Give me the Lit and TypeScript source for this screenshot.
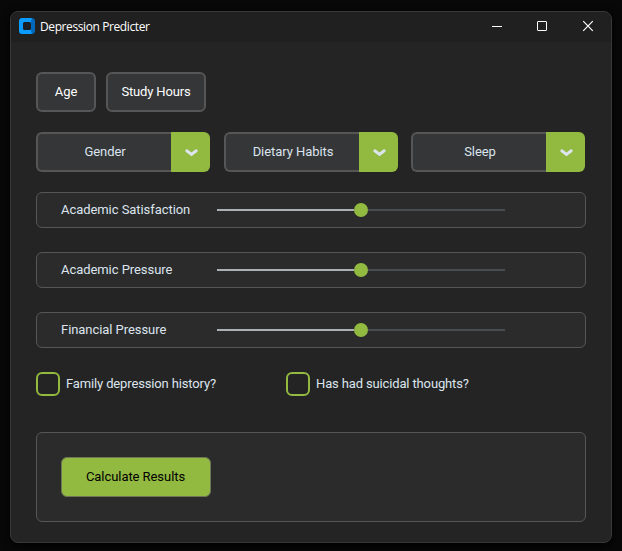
import { LitElement, html, css } from "lit";
import { customElement } from "lit/decorators.js";

@customElement("app-root")
export class AppRoot extends LitElement {
  static styles = css`
    :host {
      display: block;
      box-sizing: border-box;
      width: 622px;
      height: 551px;
      padding: 11px 10px 8px;
      overflow: hidden;
      background: #080808;
      font: 13px/16px Roboto, "Liberation Sans", sans-serif;
      letter-spacing: -0.06px;
      color: #dce4ee;
    }
    * { box-sizing: border-box; }
    .window {
      width: 602px;
      height: 532px;
      border: 1px solid #383838;
      border-radius: 8px;
      background: #242424;
      overflow: hidden;
      box-shadow: 0 2px 8px #000;
    }
    .titlebar {
      display: flex;
      align-items: center;
      height: 30px;
      padding-left: 8px;
      background: #202020;
      color: #fff;
    }
    .logo { display: block; margin: 0 5px 2px 0; }
    .title {
      flex: 1;
      font: 12px/16px "Open Sans", "Noto Sans", sans-serif;
      letter-spacing: -0.4px;
      white-space: nowrap;
    }
    .controls { display: block; flex: none; }
    .body {
      padding: 30px 25px 0;
      display: flex;
      flex-direction: column;
      white-space: nowrap;
    }
    .entries { display: flex; gap: 10px; margin-bottom: 20px; }
    .entry {
      height: 40px;
      border: 2px solid #565656;
      border-radius: 6px;
      background: #343638;
      display: flex;
      align-items: center;
      justify-content: center;
      padding-bottom: 1px;
      color: #fff;
    }
    .age { width: 60px; }
    .hours { width: 100px; letter-spacing: -0.15px; }
    .combos { display: flex; gap: 14px; margin-bottom: 20px; }
    .combo { display: flex; width: 174px; height: 40px; }
    .combo.last { margin-left: -1px; }
    .choice {
      width: 135px;
      border: 2px solid #565656;
      border-right: 0;
      border-radius: 6px 0 0 6px;
      background: #343638;
      display: flex;
      align-items: center;
      justify-content: center;
      padding: 0 0 1px 1px;
    }
    .arrow {
      width: 39px;
      border-radius: 0 6px 6px 0;
      background: #92b940;
      display: flex;
      align-items: center;
      justify-content: center;
      padding: 1px 0 0 2px;
    }
    .panel {
      width: 550px;
      border: 1px solid #565656;
      border-radius: 6px;
      background: #2b2b2b;
    }
    .rating {
      display: flex;
      align-items: center;
      height: 36px;
      padding-left: 24px;
      margin-bottom: 24px;
    }
    .label { width: 156px; padding-bottom: 1px; }
    .slider {
      width: 288px;
      display: flex;
      align-items: center;
    }
    .track { height: 2px; flex: 1; background: #4a4d50; }
    .filled { background: #aab0b5; }
    .knob {
      width: 14px;
      height: 14px;
      border-radius: 50%;
      background: #92b940;
    }
    .checks { display: flex; height: 24px; margin-bottom: 36px; }
    .check {
      display: flex;
      align-items: center;
      gap: 6px;
      width: 250px;
      letter-spacing: -0.14px;
    }
    .box {
      width: 24px;
      height: 24px;
      border: 2px solid #92b940;
      border-radius: 6px;
    }
    .check span { padding-bottom: 1px; }
    .result { height: 90px; padding: 24px; }
    .button {
      display: block;
      width: 150px;
      height: 40px;
      padding: 0 1px 1px 0;
      border: 1px solid #6e7656;
      border-radius: 6px;
      background: #92b940;
      color: #000;
      font: inherit;
      letter-spacing: inherit;
    }
  `;

  combo(name: string, cls = "") {
    return html`<div class="combo ${cls}">
      <div class="choice">${name}</div>
      <div class="arrow">
        <svg width="14" height="9" viewBox="0 0 14 9">
          <path d="M1.8 2.800 6.500 6.400 11.200 2.800" fill="none" stroke="#dce4ee" stroke-width="3" stroke-linecap="round" />
        </svg>
      </div>
    </div>`;
  }

  rating(name: string) {
    return html`<div class="panel rating">
      <div class="label">${name}</div>
      <div class="slider">
        <div class="track filled"></div>
        <div class="knob"></div>
        <div class="track"></div>
      </div>
    </div>`;
  }

  check(name: string) {
    return html`<div class="check"><div class="box"></div><span>${name}</span></div>`;
  }

  render() {
    return html`<div class="window">
      <div class="titlebar">
        <svg class="logo" width="16" height="16" viewBox="0 0 16 16">
          <rect width="16" height="16" rx="3.5" fill="#0068b8" />
          <path d="M3.5 0H13L12 3V13L13 16H3.5A3.5 3.5 0 0 1 0 12.500V3.500A3.500 3.500 0 0 1 3.500 0Z" fill="#0a9bff" />
          <rect x="4" y="4" width="8" height="8" rx="1.500" fill="#1b1e22" />
        </svg>
        <div class="title">Depression Predicter</div>
        <svg class="controls" width="138" height="30" viewBox="0 0 138 30" fill="none" stroke="#fff">
          <path d="M19 14.500H29" />
          <rect x="64.500" y="9.500" width="9" height="9" rx="0.500" />
          <path d="M110.200 9.200 119.800 18.800M119.800 9.200 110.200 18.800" stroke-width="1.2" />
        </svg>
      </div>
      <div class="body">
        <div class="entries">
          <div class="entry age">Age</div>
          <div class="entry hours">Study Hours</div>
        </div>
        <div class="combos">
          ${this.combo("Gender")}${this.combo("Dietary Habits")}${this.combo("Sleep", "last")}
        </div>
        ${["Academic Satisfaction", "Academic Pressure", "Financial Pressure"].map((n) => this.rating(n))}
        <div class="checks">
          ${this.check("Family depression history?")}${this.check("Has had suicidal thoughts?")}
        </div>
        <div class="panel result"><button class="button">Calculate Results</button></div>
      </div>
    </div>`;
  }
}
